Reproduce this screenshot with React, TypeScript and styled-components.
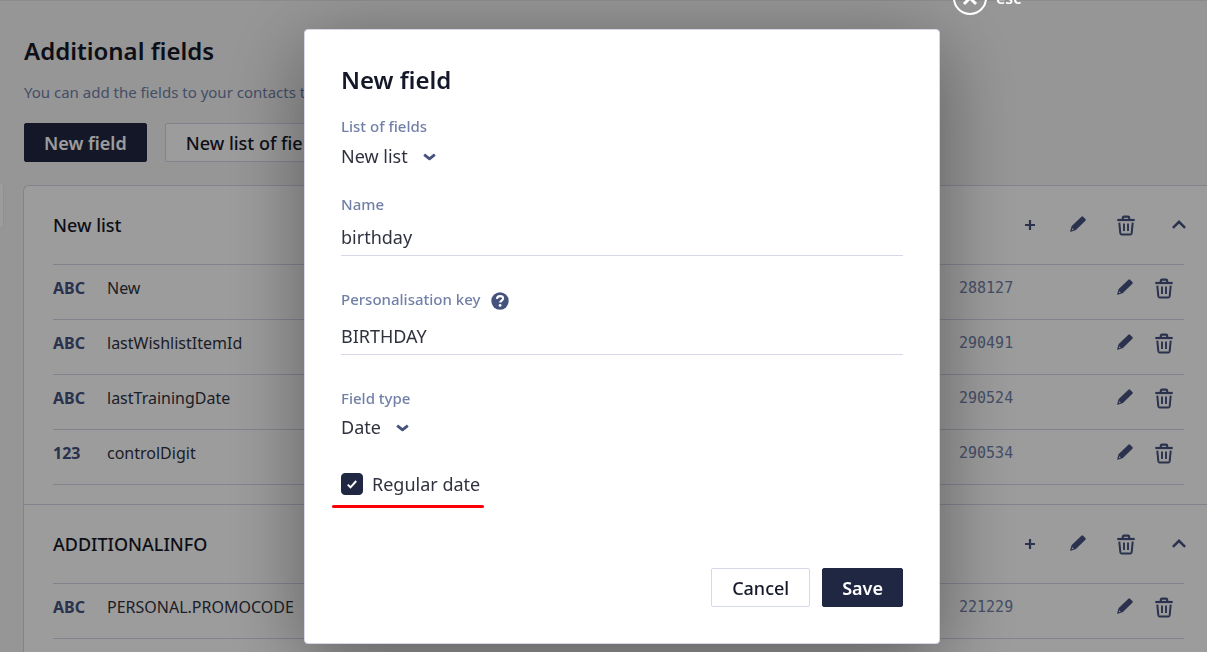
import React, { useId, useState } from "react";
import styled, { createGlobalStyle, css } from "styled-components";

const color = {
  ink: "#141828",
  navy: "#1f2742",
  icon: "#45527e",
  label: "#7280a8",
  text: "#30333f",
  line: "#d5d8e6",
};

const GlobalStyle = createGlobalStyle`
  *, *::before, *::after { box-sizing: border-box; }
  html, body, #root { height: 100%; }
  body {
    margin: 0;
    overflow: hidden;
    background: #f5f5f5;
    color: ${color.text};
    font: 400 18px/24px "Noto Sans", "Open Sans", sans-serif;
  }
  button, input, select { font: inherit; color: inherit; }
`;

/* ---------- icons ---------- */

const Svg = styled.svg`
  display: block;
  flex: none;
  overflow: visible;
`;

const PlusIcon = () => (
  <Svg width="10" height="10" viewBox="0 0 10 10" fill="none" stroke="currentColor" strokeWidth="2.2">
    <path d="M5 0v10M0 5h10" />
  </Svg>
);

const PencilIcon = () => (
  <Svg width="16" height="18" viewBox="0 0 16 18" fill="currentColor">
    <path
      fillRule="evenodd"
      d="M11.4.7a1.2 1.2 0 0 1 1.7 0l2.3 2.3a1.2 1.2 0 0 1 0 1.7L6.4 13.6c-.3.3-.6.5-1 .6L.8 15.8c-.4.1-.7-.2-.6-.6l1.2-4.5c.1-.4.3-.7.6-1zM2.5 12.3l-.7 1.9 2-.7z"
    />
  </Svg>
);

const TrashIcon = () => (
  <Svg width="18" height="20" viewBox="0 0 18 20" fill="none" stroke="currentColor" strokeWidth="2.2">
    <path d="M.3 5h17.4" />
    <path d="M5.8 4.6V3c0-.8.5-1.3 1.2-1.3h4c.7 0 1.2.5 1.2 1.3v1.6" />
    <path d="M2.3 7.6l1 10.6c.1.8.5 1.2 1.2 1.2h9c.7 0 1.1-.4 1.2-1.2l1-10.6" strokeWidth="2" />
    <path d="M7 8.6V16M11 8.6V16" strokeWidth="1.9" />
  </Svg>
);

const ChevronUpIcon = () => (
  <Svg width="14" height="10" viewBox="0 0 14 10" fill="none" stroke="currentColor" strokeWidth="2.5">
    <path d="M.9 7.9L7 1.8l6.1 6.1" />
  </Svg>
);

const ChevronDownIcon = () => (
  <Svg width="13" height="8" viewBox="0 0 13 8" fill="none" stroke="currentColor" strokeWidth="2.8" strokeLinejoin="round">
    <path d="M1.2 1.6l5.3 4.2 5.3-4.2" />
  </Svg>
);

const HelpIcon = () => (
  <Svg width="18" height="18" viewBox="0 0 18 18">
    <circle cx="9" cy="9" r="8.7" fill="currentColor" />
    <path
      d="M5.9 6.9c.1-1.8 1.4-2.8 3.2-2.8 1.7 0 3 .9 3 2.4 0 2.1-2.9 2.1-2.9 4.1"
      fill="none"
      stroke="#fff"
      strokeWidth="2.1"
    />
    <circle cx="9.1" cy="13.4" r="1.4" fill="#fff" />
  </Svg>
);

const CheckIcon = () => (
  <Svg width="10" height="9" viewBox="0 0 10 9" fill="none" stroke="#fff" strokeWidth="2">
    <path d="M.8 4.6l2.7 2.8L9.2 1" />
  </Svg>
);

const CloseIcon = () => (
  <Svg width="34" height="34" viewBox="0 0 34 34" fill="none" stroke="#fff">
    <circle cx="17" cy="17" r="16" strokeWidth="2" />
    <path d="M11 11l12 12M23 11L11 23" strokeWidth="3" />
  </Svg>
);

/* ---------- shared parts ---------- */

const Button = styled.button<{ $primary?: boolean }>`
  height: 39px;
  padding: 0 20px;
  border: 1px solid ${color.line};
  border-radius: 2px;
  background: #fff;
  color: ${color.ink};
  font-weight: 500;
  white-space: nowrap;
  cursor: pointer;
  ${(p) =>
    p.$primary &&
    css`
      padding: 0 19px;
      border-color: ${color.navy};
      background: ${color.navy};
      color: #fff;
      font-weight: 600;
    `}
`;

const IconButton = styled.button<{ $wide?: boolean }>`
  display: flex;
  align-items: center;
  justify-content: center;
  width: ${(p) => (p.$wide ? 34 : 24)}px;
  height: 24px;
  padding: 0;
  border: 0;
  background: none;
  color: ${color.icon};
  cursor: pointer;
`;

/* ---------- page ---------- */

const Page = styled.main`
  min-height: 100%;
  padding: 34px 0 0 24px;
  border-top: 1px solid #e4e4e8;
`;

const DrawerHandle = styled.div`
  position: absolute;
  top: 182px;
  left: 0;
  width: 4px;
  height: 47px;
  border: 1px solid #ececf0;
  border-left: 0;
  border-radius: 0 4px 4px 0;
  background: #fff;
`;

const PageTitle = styled.h1`
  margin: 0 0 13px;
  color: ${color.ink};
  font-size: 24px;
  line-height: 32px;
  font-weight: 600;
`;

const Intro = styled.p`
  margin: 0 0 19px;
  color: ${color.label};
  font-size: 15px;
  white-space: nowrap;
`;

const Toolbar = styled.div`
  display: flex;
  gap: 18px;
  margin-bottom: 23px;
`;

const Panel = styled.div`
  margin-left: -1px;
  border: 1px solid ${color.line};
  border-width: 1px 0 0 1px;
  border-radius: 6px 0 0 0;
  background: #fff;
`;

const Section = styled.section`
  padding: 0 23px 19px 29px;
  & + & {
    border-top: 1px solid ${color.line};
  }
`;

const SectionHeader = styled.header`
  display: flex;
  align-items: center;
  justify-content: space-between;
  height: 78px;
  margin-right: -12px;
`;

const SectionTitle = styled.h2`
  margin: 0;
  color: ${color.ink};
  font-size: 18px;
  font-weight: 500;
`;

const SectionActions = styled.div`
  display: flex;
  gap: 24px;
`;

const FieldTable = styled.table`
  width: 100%;
  table-layout: fixed;
  border-spacing: 0;
  border-bottom: 1px solid ${color.line};
`;

const Cell = styled.td<{ $width?: number }>`
  width: ${(p) => (p.$width ? `${p.$width}px` : "auto")};
  height: 55px;
  padding: 0 0 8px;
  border-top: 1px solid ${color.line};
  font-size: 16px;
  white-space: nowrap;
`;

const TypeCell = styled(Cell)`
  color: ${color.icon};
  font-weight: 700;
`;

const IdCell = styled(Cell)`
  color: ${color.label};
  font-family: "DejaVu Sans Mono", monospace;
  font-size: 15px;
`;

const RowActions = styled.div`
  display: flex;
  gap: 15px;
`;

/* ---------- dialog ---------- */

const Overlay = styled.div`
  position: fixed;
  inset: 0;
  display: flex;
  align-items: flex-start;
  justify-content: center;
  padding: 29px 0 8px 37px;
  background: rgba(0, 0, 0, 0.39);
`;

const Dialog = styled.div`
  position: relative;
  width: 636px;
  max-width: 100%;
  padding: 34px 36px 36px;
  border: 1px solid ${color.line};
  border-radius: 4px;
  background: #fff;
  box-shadow: 0 18px 80px rgba(0, 0, 0, 0.4);
`;

const CloseButton = styled.button`
  position: absolute;
  top: -49px;
  left: calc(100% + 14px);
  display: flex;
  align-items: center;
  gap: 9px;
  padding: 0;
  border: 0;
  background: none;
  color: #fff;
  font-size: 16px;
  font-weight: 600;
  cursor: pointer;
`;

const DialogTitle = styled.h2`
  margin: 0 0 20px;
  color: ${color.ink};
  font-size: 24px;
  line-height: 32px;
  font-weight: 600;
`;

const Field = styled.div<{ $tight?: boolean }>`
  margin-bottom: ${(p) => (p.$tight ? 26 : 33)}px;
`;

const LabelRow = styled.div<{ $gap: number }>`
  display: flex;
  align-items: center;
  gap: 11px;
  height: 20px;
  margin-bottom: ${(p) => p.$gap}px;
`;

const Label = styled.label`
  color: ${color.label};
  font-size: 15px;
  line-height: 20px;
  font-weight: 500;
`;

const HelpButton = styled(IconButton)`
  width: 18px;
  height: 22px;
  align-items: flex-end;
`;

const TextInput = styled.input`
  display: block;
  width: 100%;
  height: 37px;
  padding: 0;
  border: 0;
  border-bottom: 1px solid ${color.line};
  border-radius: 0;
  outline: 0;
  background: none;
`;

const SelectWrap = styled.div`
  position: relative;
  display: flex;
  width: fit-content;
  color: ${color.icon};
  svg {
    position: absolute;
    top: 9px;
    right: 0;
    pointer-events: none;
  }
`;

const Select = styled.select`
  appearance: none;
  field-sizing: content;
  height: 24px;
  padding: 0 28px 0 0;
  border: 0;
  outline: 0;
  background: none;
  color: ${color.text};
`;

const CheckLabel = styled.label`
  position: relative;
  display: flex;
  align-items: center;
  gap: 9px;
  width: fit-content;
  height: 22px;
  margin: 34px 0 73px;
  svg {
    position: absolute;
    left: 6px;
    pointer-events: none;
  }
  &::after {
    content: "";
    position: absolute;
    top: 32px;
    left: -9px;
    right: -4px;
    height: 3px;
    border-radius: 2px;
    background: #fb0007;
  }
`;

const Checkbox = styled.input`
  appearance: none;
  width: 22px;
  height: 22px;
  margin: 0;
  border: 1px solid ${color.navy};
  border-radius: 4px;
  &:checked {
    background: ${color.navy};
  }
`;

const DialogFooter = styled.footer`
  display: flex;
  justify-content: flex-end;
  gap: 12px;
`;

/* ---------- data ---------- */

type FieldRow = { type: string; name: string; id: string };

const lists: { title: string; rows: FieldRow[] }[] = [
  {
    title: "New list",
    rows: [
      { type: "ABC", name: "New", id: "288127" },
      { type: "ABC", name: "lastWishlistItemId", id: "290491" },
      { type: "ABC", name: "lastTrainingDate", id: "290524" },
      { type: "123", name: "controlDigit", id: "290534" },
    ],
  },
  {
    title: "ADDITIONALINFO",
    rows: [{ type: "ABC", name: "PERSONAL.PROMOCODE", id: "221229" }],
  },
];

function FieldList({ title, rows }: { title: string; rows: FieldRow[] }) {
  return (
    <Section>
      <SectionHeader>
        <SectionTitle>{title}</SectionTitle>
        <SectionActions>
          <IconButton aria-label="Add field"><PlusIcon /></IconButton>
          <IconButton aria-label="Rename list"><PencilIcon /></IconButton>
          <IconButton aria-label="Delete list"><TrashIcon /></IconButton>
          <IconButton $wide aria-label="Collapse list"><ChevronUpIcon /></IconButton>
        </SectionActions>
      </SectionHeader>
      <FieldTable>
        <tbody>
          {rows.map((row) => (
            <tr key={row.id}>
              <TypeCell $width={54}>{row.type}</TypeCell>
              <Cell>{row.name}</Cell>
              <IdCell $width={154}>{row.id}</IdCell>
              <Cell $width={71}>
                <RowActions>
                  <IconButton aria-label="Edit field"><PencilIcon /></IconButton>
                  <IconButton aria-label="Delete field"><TrashIcon /></IconButton>
                </RowActions>
              </Cell>
            </tr>
          ))}
        </tbody>
      </FieldTable>
    </Section>
  );
}

function NewFieldDialog() {
  const id = useId();
  const [name, setName] = useState("birthday");
  const [personalKey, setPersonalKey] = useState("BIRTHDAY");
  const [regular, setRegular] = useState(true);

  return (
    <Overlay>
      <Dialog role="dialog" aria-modal="true" aria-labelledby={`${id}-title`}>
        <CloseButton>
          <CloseIcon />
          esc
        </CloseButton>
        <DialogTitle id={`${id}-title`}>New field</DialogTitle>
        <Field $tight>
          <LabelRow $gap={8}>
            <Label htmlFor={`${id}-list`}>List of fields</Label>
          </LabelRow>
          <SelectWrap>
            <Select id={`${id}-list`}>
              <option>New list</option>
            </Select>
            <ChevronDownIcon />
          </SelectWrap>
        </Field>
        <Field>
          <LabelRow $gap={5}>
            <Label htmlFor={`${id}-name`}>Name</Label>
          </LabelRow>
          <TextInput id={`${id}-name`} value={name} onChange={(e) => setName(e.target.value)} />
        </Field>
        <Field>
          <LabelRow $gap={9}>
            <Label htmlFor={`${id}-key`}>Personalisation key</Label>
            <HelpButton aria-label="Help"><HelpIcon /></HelpButton>
          </LabelRow>
          <TextInput id={`${id}-key`} value={personalKey} onChange={(e) => setPersonalKey(e.target.value)} />
        </Field>
        <Field>
          <LabelRow $gap={7}>
            <Label htmlFor={`${id}-type`}>Field type</Label>
          </LabelRow>
          <SelectWrap>
            <Select id={`${id}-type`}>
              <option>Date</option>
            </Select>
            <ChevronDownIcon />
          </SelectWrap>
        </Field>
        <CheckLabel>
          <Checkbox type="checkbox" checked={regular} onChange={(e) => setRegular(e.target.checked)} />
          {regular && <CheckIcon />}
          Regular date
        </CheckLabel>
        <DialogFooter>
          <Button>Cancel</Button>
          <Button $primary>Save</Button>
        </DialogFooter>
      </Dialog>
    </Overlay>
  );
}

export default function App() {
  return (
    <>
      <GlobalStyle />
      <Page>
        <PageTitle>Additional fields</PageTitle>
        <Intro>You can add the fields to your contacts to</Intro>
        <Toolbar>
          <Button $primary>New field</Button>
          <Button>New list of fields</Button>
        </Toolbar>
        <Panel>
          {lists.map((list) => (
            <FieldList key={list.title} {...list} />
          ))}
        </Panel>
      </Page>
      <DrawerHandle />
      <NewFieldDialog />
    </>
  );
}
